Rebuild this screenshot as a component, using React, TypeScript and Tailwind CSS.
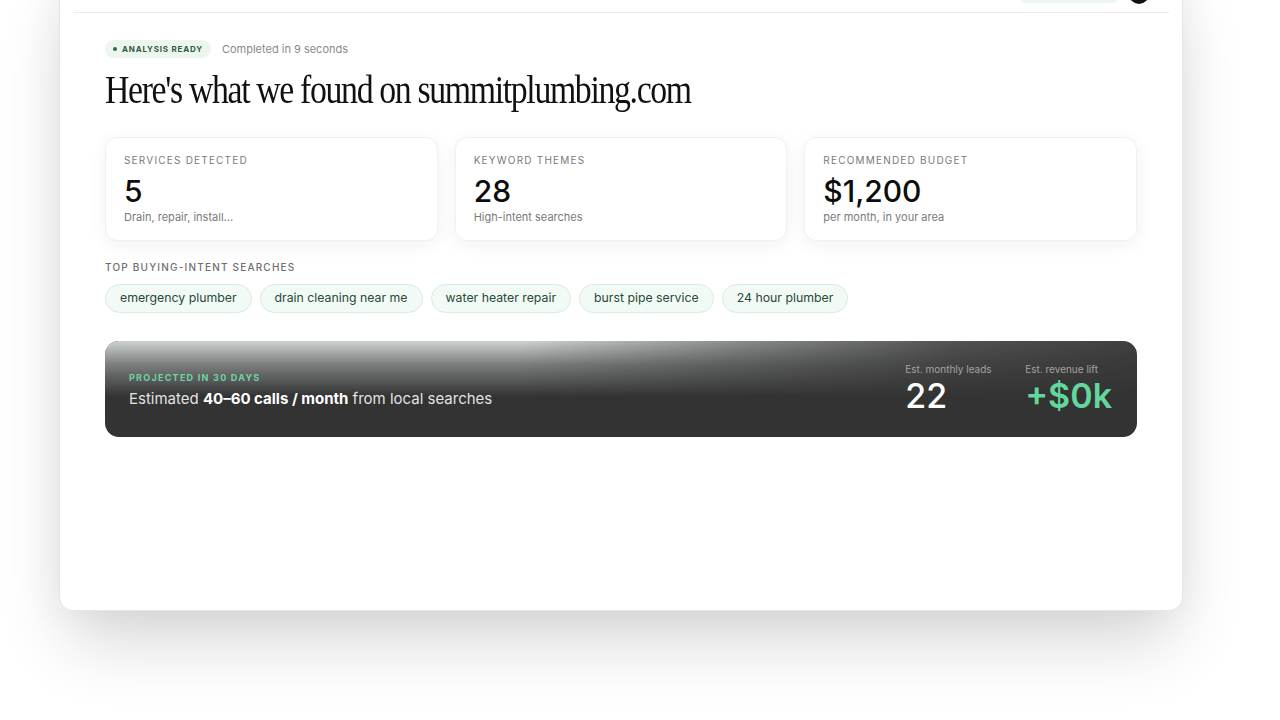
import React from "react";

const chips = [
  "emergency plumber",
  "drain cleaning near me",
  "water heater repair",
  "burst pipe service",
  "24 hour plumber",
];

const stats = [
  { label: "Services detected", value: "5", sub: "Drain, repair, install..." },
  { label: "Keyword themes", value: "28", sub: "High-intent searches" },
  { label: "Recommended budget", value: "$1,200", sub: "per month, in your area" },
];

export default function App() {
  return (
    <div
      className="w-[1280px] h-[720px] overflow-hidden bg-white"
      style={{ fontFamily: "Inter, 'Liberation Sans', sans-serif" }}
    >
      <div className="ml-[59px] mt-[-40px] w-[1124px] h-[651px] rounded-[14px] bg-white border border-[#e6e6e6] shadow-[0_40px_70px_-10px_rgba(0,0,0,0.16),0_0_40px_rgba(0,0,0,0.05)] flex flex-col">
        <div className="h-[52px] mx-[13px] border-b border-[#ececec] flex items-start justify-end pr-[20px] gap-3">
          <div className="mt-[34px] w-[96px] h-[8px] rounded-full bg-[#eef6f1]" />
          <div className="mt-[30px] w-[20px] h-[13px] rounded-b-full bg-[#111]" />
        </div>
        <div className="pl-[45px] pr-[45px] pt-[27px] flex flex-col">
          <div className="flex items-center gap-[11px]">
            <div className="h-[18px] px-[8px] rounded-full bg-[#ecf6ef] flex items-center gap-[5px]">
              <span className="w-[4px] h-[4px] rounded-full bg-[#2f6b48]" />
              <span className="text-[8px] font-bold tracking-[0.1em] text-[#2f5a41] uppercase">Analysis ready</span>
            </div>
            <span className="text-[11px] text-[#8a8a8a]">Completed in 9 seconds</span>
          </div>
          <div className="mt-[10px] h-[44px]">
            <h1
              className="inline-block origin-left scale-x-[0.845] whitespace-nowrap text-[40px] leading-[44px] text-[#111] tracking-[-0.04em]"
              style={{ fontFamily: "'Liberation Serif', 'DejaVu Serif', serif" }}
            >
              Here's what we found on summitplumbing.com
            </h1>
          </div>
          <div className="mt-[25px] grid grid-cols-3 gap-[17px]">
            {stats.map((s) => (
              <div
                key={s.label}
                className="h-[104px] rounded-[12px] bg-white border border-[#f1f1f1] shadow-[0_4px_18px_rgba(0,0,0,0.06)] px-[18px] pt-[16px]"
              >
                <div className="text-[10px] tracking-[0.12em] uppercase text-[#7a7a7a] leading-[12px]">{s.label}</div>
                <div className="mt-[8px] text-[30px] font-medium leading-[34px] text-[#0d0d0d]">{s.value}</div>
                <div className="mt-[2px] text-[11px] text-[#7a7a7a] leading-[14px]">{s.sub}</div>
              </div>
            ))}
          </div>
          <div className="mt-[20px] text-[10px] font-medium tracking-[0.12em] uppercase text-[#6f6f6f] leading-[12px]">
            Top buying-intent searches
          </div>
          <div className="mt-[11px] flex gap-[8px]">
            {chips.map((c) => (
              <div
                key={c}
                className="h-[29px] px-[14px] rounded-full bg-[#f1faf4] border border-[#d9ece0] flex items-center text-[12.3px] text-[#2a4a38]"
              >
                {c}
              </div>
            ))}
          </div>
          <div className="relative mt-[28px] h-[96px] rounded-[14px] bg-[#333333] overflow-hidden flex items-center justify-between pl-[24px] pr-[25px]">
            <div
              className="absolute inset-0"
              style={{
                background:
                  "linear-gradient(180deg, rgba(215,220,218,0.95) 0%, rgba(160,165,163,0.65) 25%, rgba(51,51,51,0) 58%)",
                maskImage:
                  "linear-gradient(90deg, #000 0%, #000 40%, rgba(0,0,0,0.55) 62%, rgba(0,0,0,0.2) 82%, rgba(0,0,0,0.08) 100%)",
                WebkitMaskImage:
                  "linear-gradient(90deg, #000 0%, #000 40%, rgba(0,0,0,0.55) 62%, rgba(0,0,0,0.2) 82%, rgba(0,0,0,0.08) 100%)",
              }}
            />
            <div className="relative flex flex-col pt-[2px]">
              <div className="text-[9px] font-bold tracking-[0.14em] uppercase text-[#6fd3a0] leading-[12px]">
                Projected in 30 days
              </div>
              <div className="mt-[5px] text-[15px] text-[#e2e2e2] leading-[20px]">
                Estimated <span className="font-bold text-white">40–60 calls / month</span> from local searches
              </div>
            </div>
            <div className="relative flex gap-[26px] items-start">
              <div className="flex flex-col w-[94px]">
                <span className="text-[10px] text-[#a3a3a3] leading-[12px] whitespace-nowrap">Est. monthly leads</span>
                <span className="mt-[2px] text-[34px] font-medium text-white leading-[38px]">22</span>
              </div>
              <div className="flex flex-col">
                <span className="text-[10px] text-[#a3a3a3] leading-[12px] whitespace-nowrap">Est. revenue lift</span>
                <span className="mt-[2px] text-[34px] font-semibold text-[#63d69c] leading-[38px]">+$0k</span>
              </div>
            </div>
          </div>
        </div>
      </div>
    </div>
  );
}
